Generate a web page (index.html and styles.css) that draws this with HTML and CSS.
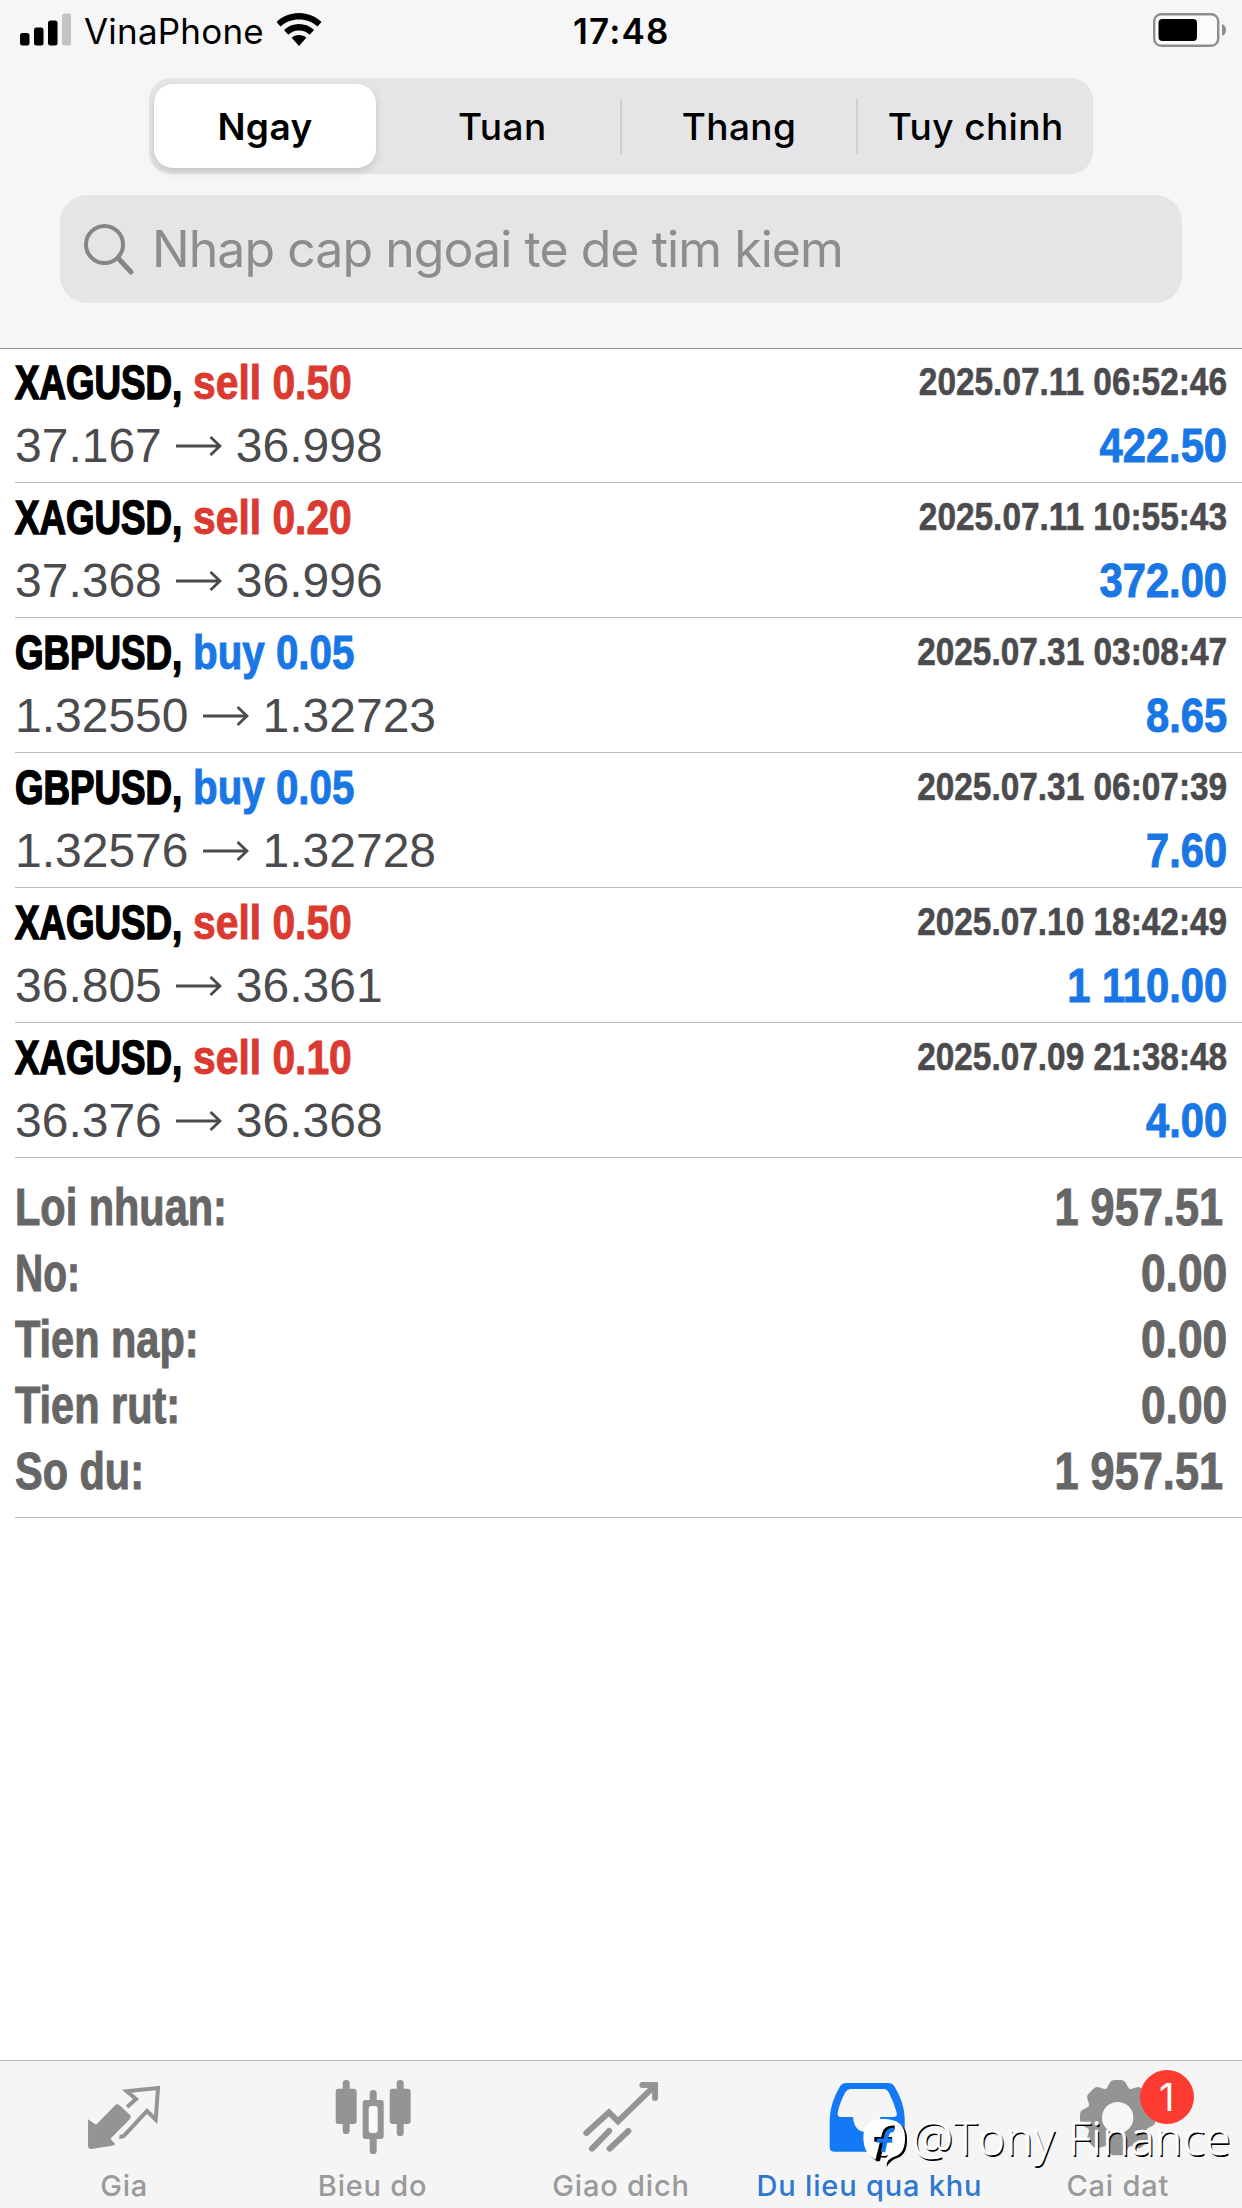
FILE: index.html
```html
<!DOCTYPE html>
<html lang="vi">
<head>
<meta charset="utf-8">
<title>Du lieu qua khu</title>
<link rel="stylesheet" href="styles.css">
</head>
<body>
<div class="app">
  <header class="header">
    <div class="status">
      <svg class="signal" width="52" height="33" viewBox="0 0 52 33"><rect y="20" width="9.500" height="12.500" rx="2.500"/><rect x="14" y="14.500" width="9.500" height="18" rx="2.500"/><rect x="28" y="7.500" width="9.500" height="25" rx="2.500"/><rect x="42" y=".5" width="9" height="32" rx="2.500" fill="#c3c3c3"/></svg>
      <span class="carrier">VinaPhone</span>
      <svg class="wifi" width="46" height="33" viewBox="0 0 46 33"><path d="M23 0C14 0 6 3.500.500 9l4 4.500C9.500 9 16 6.500 23 6.500S36.500 9 41.500 13.500l4-4.500C40 3.500 32 0 23 0zM23 11c-6 0-11 2.200-15 6l4.300 4.700c3-2.700 6.500-4.200 10.700-4.200s7.700 1.500 10.700 4.200L38 17c-4-3.800-9-6-15-6zM23 22c-3 0-5.300 1-7.300 2.700L23 33l7.300-8.300C28.300 23 26 22 23 22z"/></svg>
      <span class="clock">17:48</span>
      <svg class="battery" width="75" height="34" viewBox="0 0 75 34"><rect x="1.200" y="1.200" width="64" height="31.600" rx="7" fill="#fbfbfb" stroke="#8e8e8e" stroke-width="2.400"/><rect x="5.500" y="6" width="38.500" height="22" rx="4"/><path d="M69 11q4 1.500 4 6t-4 6z" fill="#8e8e8e"/></svg>
    </div>
    <div class="segments">
      <span class="segment segment-active"><b>Ngay</b></span>
      <span class="segment"><b>Tuan</b></span>
      <span class="segment"><b>Thang</b></span>
      <span class="segment"><b>Tuy chinh</b></span>
    </div>
    <div class="search">
      <svg width="50" height="51" viewBox="0 0 50 51" fill="none" stroke="#858588" stroke-linecap="round"><circle cx="20.500" cy="20.500" r="18.500" stroke-width="4"/><path d="M34 34l13 14" stroke-width="5"/></svg>
      <span class="placeholder">Nhap cap ngoai te de tim kiem</span>
    </div>
  </header>

  <main class="history">
    <div class="deal"><div class="name"><span class="symbol">XAGUSD,</span> <span class="side sell">sell 0.50</span></div><div class="date">2025.07.11 06:52:46</div><div class="price">37.167<svg class="arrow" viewBox="0 0 46 20"><path d="M0 10h44M34.500 1l9.500 9-9.500 9"/></svg>36.998</div><div class="profit">422.50</div></div>
    <div class="deal"><div class="name"><span class="symbol">XAGUSD,</span> <span class="side sell">sell 0.20</span></div><div class="date">2025.07.11 10:55:43</div><div class="price">37.368<svg class="arrow" viewBox="0 0 46 20"><path d="M0 10h44M34.500 1l9.500 9-9.500 9"/></svg>36.996</div><div class="profit">372.00</div></div>
    <div class="deal"><div class="name"><span class="symbol">GBPUSD,</span> <span class="side buy">buy 0.05</span></div><div class="date">2025.07.31 03:08:47</div><div class="price">1.32550<svg class="arrow" viewBox="0 0 46 20"><path d="M0 10h44M34.500 1l9.500 9-9.500 9"/></svg>1.32723</div><div class="profit">8.65</div></div>
    <div class="deal"><div class="name"><span class="symbol">GBPUSD,</span> <span class="side buy">buy 0.05</span></div><div class="date">2025.07.31 06:07:39</div><div class="price">1.32576<svg class="arrow" viewBox="0 0 46 20"><path d="M0 10h44M34.500 1l9.500 9-9.500 9"/></svg>1.32728</div><div class="profit">7.60</div></div>
    <div class="deal"><div class="name"><span class="symbol">XAGUSD,</span> <span class="side sell">sell 0.50</span></div><div class="date">2025.07.10 18:42:49</div><div class="price">36.805<svg class="arrow" viewBox="0 0 46 20"><path d="M0 10h44M34.500 1l9.500 9-9.500 9"/></svg>36.361</div><div class="profit">1 110.00</div></div>
    <div class="deal"><div class="name"><span class="symbol">XAGUSD,</span> <span class="side sell">sell 0.10</span></div><div class="date">2025.07.09 21:38:48</div><div class="price">36.376<svg class="arrow" viewBox="0 0 46 20"><path d="M0 10h44M34.500 1l9.500 9-9.500 9"/></svg>36.368</div><div class="profit">4.00</div></div>
    <dl class="totals">
      <div><dt>Loi nhuan:</dt><dd class="ends-in-one">1 957.51</dd></div>
      <div><dt class="narrow">No:</dt><dd>0.00</dd></div>
      <div><dt>Tien nap:</dt><dd>0.00</dd></div>
      <div><dt>Tien rut:</dt><dd>0.00</dd></div>
      <div><dt>So du:</dt><dd class="ends-in-one">1 957.51</dd></div>
    </dl>
  </main>

  <nav class="tabs">
    <a class="tab"><svg viewBox="0 33 745 315"><path fill="#949494" d="M264 208L288 224 346 165Q352 160 358 165L391 196Q394 202 390 207L331 266 346 283Q343 287 330 288L275 297Q264 297 264 288z"/><path fill="none" stroke="#949494" stroke-width="12" d="M381 171L408 147 380 124 474 114 467 209 441 183 373 256Q368 262 358 260"/></svg><span>Gia</span></a>
    <a class="tab"><svg viewBox="745 33 745 315" fill="#949494"><rect x="1029" y="90" width="21" height="162" rx="10"/><rect x="1008" y="116" width="63" height="106" rx="9"/><rect x="1191" y="90" width="21" height="168" rx="10"/><rect x="1170" y="116" width="63" height="106" rx="9"/><rect x="1110" y="120" width="21" height="192" rx="10"/><rect x="1089" y="150" width="63" height="117" rx="9"/><rect x="1107" y="168" width="27" height="81" rx="9" fill="#fafafa"/></svg><span>Bieu do</span></a>
    <a class="tab"><svg viewBox="-10 33 745 315" fill="none" stroke="#949494" stroke-width="18" stroke-linecap="round"><path d="M258 249L326 187 353 214 458 112"/><path d="M426 105H464V144"/><path d="M440 105l24 24V105z" fill="#949494" stroke="none"/><path d="M275 296L326 243M328 296L384 243"/></svg><span>Giao dich</span></a>
    <a class="tab tab-active"><svg viewBox="736 33 745 315" fill="#1479f4"><path fill-rule="evenodd" d="M1040 99H1165Q1178 99 1184 109Q1214 158 1215 205V292Q1215 305 1202 305H1003Q990 305 990 292V205Q992 158 1021 109Q1028 99 1040 99zM1052 117Q1042 118 1037 127Q1020 158 1014 188Q1012 201 1024 201H1060Q1063 247 1102 247T1142 201H1180Q1194 201 1191 188Q1183 158 1168 129Q1162 117 1152 117z"/></svg><span>Du lieu qua khu</span></a>
    <a class="tab"><svg viewBox="575 33 745 315"><g fill="#949494"><circle cx="946" cy="203" r="94"/><path id="tooth" d="M908 125L922 98Q926 90 936 90H956Q966 90 970 98L984 125z"/><use href="#tooth" transform="rotate(45 946 203)"/><use href="#tooth" transform="rotate(90 946 203)"/><use href="#tooth" transform="rotate(135 946 203)"/><use href="#tooth" transform="rotate(180 946 203)"/><use href="#tooth" transform="rotate(225 946 203)"/><use href="#tooth" transform="rotate(270 946 203)"/><use href="#tooth" transform="rotate(315 946 203)"/></g><circle cx="946" cy="203" r="47" fill="#f7f7f7"/></svg><span>Cai dat</span><i class="badge">1</i></a>
  </nav>

  <div class="watermark">
    <svg viewBox="129 144 144 156"><path id="bubble" transform="translate(6 5)" d="M190 147Q255 147 255 202Q256 248 228 258Q204 266 194 286Q194 266 205 256Q190 260 176 257L168 270Q130 252 130 202Q130 147 190 147z"/><path fill="#fff" d="M190 147Q255 147 255 202Q256 248 228 258Q204 266 194 286Q194 266 205 256Q190 260 176 257L168 270Q130 252 130 202Q130 147 190 147z"/><path fill="none" stroke="#000" stroke-width="14" d="M224 174Q198 172 193 192L173 272M163 208H216"/><path fill="none" stroke="#1479f4" stroke-width="13" d="M222 180Q205 178 200 196L189 246M171 212H217"/></svg>
    <span>@Tony Finance</span>
  </div>
</div>
</body>
</html>
```
FILE: styles.css
```css
* { box-sizing: border-box; }
body { margin: 0; background: #fff; font-family: Inter, "Liberation Sans", sans-serif; }
.app { position: relative; width: 1242px; height: 2208px; display: flex; flex-direction: column; overflow: hidden; background: #fff; }

.header { height: 348px; flex: none; background: #f6f6f6; display: flex; flex-direction: column; align-items: center; }
.status { width: 100%; height: 78px; padding: 13px 14px 0 20px; display: grid; grid-template-columns: 64px 192px 297px 1fr 75px; align-items: start; }
.status span { font-size: 35px; line-height: 36px; white-space: nowrap; }
.carrier { letter-spacing: .2px; }
.clock { font-weight: 600; letter-spacing: 1.2px; }

.segments { width: 944px; height: 96px; flex: none; border-radius: 22px; background: #e5e5e7; display: flex; align-items: center; }
.segment { flex: 1; height: 55px; display: flex; align-items: center; justify-content: center; font-size: 37px; border-left: 2px solid #cfcfd1; }
.segment b { font-weight: 450; letter-spacing: .4px; white-space: nowrap; }
.segment-active { flex: none; width: 222px; height: 84px; margin: 0 7px 0 5px; border: 0; border-radius: 19px; background: #fff; box-shadow: 0 4px 8px rgba(0,0,0,.14); }
.segment-active b { font-weight: 600; }
.segment-active + .segment { border-color: transparent; }

.search { width: 1122px; height: 108px; flex: none; margin-top: 21px; padding-left: 24px; border-radius: 27px; background: #e5e5e7; display: flex; align-items: center; gap: 18px; }
.placeholder { font-size: 50px; line-height: 60px; letter-spacing: -.95px; color: #8d8d90; white-space: nowrap; }

.history { flex: 1; box-shadow: inset 0 1px #8e8e8e; font-family: "Liberation Sans", sans-serif; }
.deal { height: 135px; margin-left: 15px; padding: 3px 15px 0 0; border-bottom: 1px solid #bdbdbf; display: grid; grid-template-columns: 1fr auto; grid-template-rows: 63px 63px; line-height: 63px; font-size: 48px; white-space: nowrap; }
.name, .date, .profit, .totals { font-weight: 700; -webkit-text-stroke: 1px; }

/* Condensed headline face */
.name { display: flex; }
.symbol { width: 178px; transform: scaleX(.765); transform-origin: left; -webkit-text-stroke-width: 1.6px; }
.side { transform: scaleX(.85); transform-origin: left; }
.buy { transform: scaleX(.84); }
.date, .profit { text-align: right; transform: scaleX(.868); transform-origin: right; }
.date { font-size: 39px; line-height: 61px; color: #4b4b4e; transform: scaleX(.856); -webkit-text-stroke-width: .6px; }
.price { color: #4b4b4d; }
.arrow { width: 46px; height: 20px; margin: 0 14px 6px; fill: none; stroke: #4b4b4d; stroke-width: 2.800px; }
.profit, .buy { color: #1977e5; }
.sell { color: #db3a30; }

.totals { height: 360px; margin: 0 0 0 15px; padding: 17px 15px 0 0; border-bottom: 1px solid #bdbdbf; color: #666; font-size: 51px; line-height: 66px; }
.totals div { display: flex; justify-content: space-between; }
.totals dt { transform: scaleX(.813); transform-origin: left; }
.totals .narrow { transform: scaleX(.765); }
.totals dd { margin: 0; transform: scaleX(.87); transform-origin: right; }
.totals .ends-in-one { padding-right: 4px; transform: scaleX(.85); }

.tabs { height: 148px; flex: none; display: flex; border-top: 1px solid #b2b2b2; background: #f5f5f5; }
.tab { position: relative; flex: 1; display: flex; flex-direction: column; align-items: center; color: #9a9a9a; font-size: 29px; font-weight: 500; line-height: 34px; }
.tab svg { display: block; width: 100%; height: 105px; }
.tab span { margin-top: 3px; letter-spacing: .8px; white-space: nowrap; }
.tab-active { color: #2e78d0; }
.badge { position: absolute; left: 146px; top: 9px; width: 54px; height: 54px; border-radius: 50%; background: #fd3b30; color: #fff; font-size: 38px; font-style: normal; font-weight: 400; line-height: 54px; text-align: center; }

.watermark { position: absolute; left: 863px; top: 2118px; display: flex; gap: 1px; color: #fff; font-family: "Open Sans", "Noto Sans", sans-serif; font-weight: 300; font-size: 46px; line-height: 38px; letter-spacing: .6px; white-space: nowrap; text-shadow: 1.5px 1.5px 0 #000; -webkit-text-stroke: .6px #fff; }
.watermark svg { width: 48px; height: 52px; }
```
